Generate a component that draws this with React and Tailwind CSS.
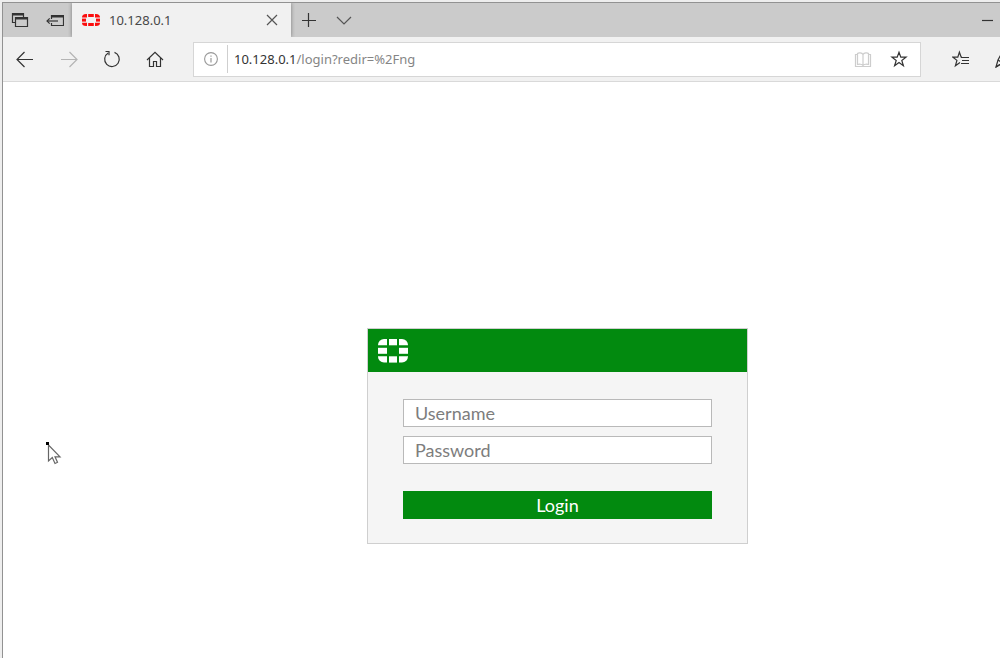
import React from "react";

function Icon({ w = 18, h = 18, className = "", children }) {
  return (
    <svg
      width={w}
      height={h}
      viewBox={`0 0 ${w} ${h}`}
      fill="none"
      stroke="currentColor"
      strokeWidth="1.2"
      className={`shrink-0 ${className}`}
      aria-hidden="true"
    >
      {children}
    </svg>
  );
}

function BrandMark({ width, height, className = "" }) {
  return (
    <svg width={width} height={height} viewBox="0 0 30 24" fill="currentColor" className={`shrink-0 ${className}`} aria-hidden="true">
      <path d="M6 0H9V6.3H0V6A6 6 0 0 1 6 0Z" />
      <path d="M11 0h8v6.3h-8z" />
      <path d="M21 0H24A6 6 0 0 1 30 6V6.3H21Z" />
      <path d="M0 8.8h9v6H0z" />
      <path d="M21 8.8h9v6h-9z" />
      <path d="M0 17.3H9V23.6H6A6 6 0 0 1 0 17.6Z" />
      <path d="M11 17.3h8v6.3h-8z" />
      <path d="M21 17.3H30V17.6A6 6 0 0 1 24 23.6H21Z" />
    </svg>
  );
}

function BarButton({ label, className = "", disabled, children }) {
  return (
    <button
      type="button"
      aria-label={label}
      disabled={disabled}
      className={`flex shrink-0 items-center justify-center ${className}`}
    >
      {children}
    </button>
  );
}

function TabStrip() {
  return (
    <div className="flex h-[34px] bg-[#cbcbcb] text-[#333]">
      <BarButton label="Tabs you've set aside" className="w-[34px]">
        <Icon>
          <path d="M4.5 11.5H1.5V2.5H12.5V6" />
          <path d="M1.5 3.5H12.5" strokeWidth="2" />
          <path d="M4.5 6.5H16.5V15.5H4.5Z" />
          <path d="M4.5 7.5H16.5" strokeWidth="2" />
        </Icon>
      </BarButton>
      <BarButton label="Set these tabs aside" className="w-[35px]">
        <Icon>
          <path d="M5.5 8V4.5H17.5V14.5H5.5V12" />
          <path d="M5.5 5.5H17.5" strokeWidth="2" />
          <path d="M12 10H1" />
          <path d="M3.7 7.3L1 10L3.7 12.7" />
        </Icon>
      </BarButton>
      <div className="flex w-[219px] shrink-0 items-center bg-[#f1f1f1] pr-[11px] pl-[10px] shadow-[0_0_4px_rgba(0,0,0,0.4)] [clip-path:inset(0_-4px)]">
        <svg width="18" height="14" viewBox="0 0 18 14" fill="#fb0d0d" className="shrink-0" aria-hidden="true">
          <path d="M4 1H5V4.5H0A4 3.5 0 0 1 4 1Z" />
          <path d="M6.2 1h5.6v3H6.2z" />
          <path d="M13 1H14A4 3.5 0 0 1 18 4.5H13Z" />
          <path d="M0 5.6h4v3H0z" />
          <path d="M14 5.6h4v3h-4z" />
          <path d="M0 9.7H5V13H4A4 3.3 0 0 1 0 9.7Z" />
          <path d="M6.2 10h5.6v3H6.2z" />
          <path d="M13 9.7H18A4 3.3 0 0 1 14 13H13Z" />
        </svg>
        <span className="ml-[9px] grow text-[13px] leading-4 text-[#484848]">10.128.0.1</span>
        <BarButton label="Close tab" className="size-4">
          <Icon w={14} h={14} className="text-[#555]">
            <path d="M2 2L12 12M12 2L2 12" />
          </Icon>
        </BarButton>
      </div>
      <BarButton label="New tab" className="w-[35px]">
        <Icon w={16} h={16}>
          <path d="M1 8.5H15M7.5 1V15" />
        </Icon>
      </BarButton>
      <BarButton label="Show tab previews" className="w-[35px]">
        <Icon w={16} h={16} className="text-[#555]">
          <path d="M1 5L8 12L15 5" />
        </Icon>
      </BarButton>
      <div className="grow" />
      <BarButton label="Minimize" className="w-6">
        <Icon w={12} h={12}>
          <path d="M0 6.5H11" />
        </Icon>
      </BarButton>
    </div>
  );
}

function Toolbar() {
  return (
    <div className="flex h-[45px] items-center overflow-hidden border-b border-[#d9d9d9] bg-[#f1f1f1] text-[#333]">
      <nav className="flex shrink-0">
        <BarButton label="Back" className="h-8 w-11">
          <Icon>
            <path d="M1 9.5H17M8.5 2L1 9.5L8.5 17" />
          </Icon>
        </BarButton>
        <BarButton label="Forward" disabled className="h-8 w-[43px] text-[#b4b4b4]">
          <Icon>
            <path d="M1 9.5H17M9.5 2L17 9.5L9.5 17" />
          </Icon>
        </BarButton>
        <BarButton label="Refresh" className="h-8 w-[43px]">
          <Icon>
            <path d="M11.5 2.4A7.3 7.3 0 1 1 5.2 3" />
            <path d="M2.5 1.5H6V5.2" />
          </Icon>
        </BarButton>
        <BarButton label="Home" className="h-8 w-[43px]">
          <Icon>
            <path d="M1 10L9 2.3L17 10" />
            <path d="M3.5 8V16.5H7.5V11.5H10.5V16.5H14.5V8" />
          </Icon>
        </BarButton>
      </nav>
      <div className="ml-[17px] flex h-[35px] min-w-0 grow items-center border border-[#d6d6d6] bg-white">
        <BarButton label="Site information" className="h-7 w-[34px] border-r border-[#cfcfcf]">
          <Icon w={16} h={16} className="text-[#999]">
            <circle cx="8" cy="8" r="6.4" strokeWidth="1.1" />
            <path d="M8 7V11.5M8 4.5V5.8" />
          </Icon>
        </BarButton>
        <a href="#login" className="ml-[6px] grow text-[13px] leading-4 text-[#858585]">
          <span className="text-[#333]">10.128.0.1</span>/login?redir=%2Fng
        </a>
        <BarButton label="Reading view" disabled className="h-8 w-9 text-[#cdcdcd]">
          <Icon>
            <path d="M9 4.5C8 2.5 4.5 2.5 3.5 3.5V14.5C5 14 8 14 9 15.5C10 14 13 14 14.5 14.5V3.5C13.5 2.5 10 2.5 9 4.5V15.5" />
            <path d="M3.5 4.5H1.5V16.5H16.5V4.5H14.5" />
          </Icon>
        </BarButton>
        <BarButton label="Add to favorites" className="mr-[3px] h-8 w-9">
          <Icon>
            <path d="M9 2.2L10.8 7.2H16L11.8 10.4L13.4 15.8L9 12.6L4.6 15.8L6.2 10.4L2 7.2H7.2Z" />
          </Icon>
        </BarButton>
      </div>
      <BarButton label="Favorites" className="ml-5 h-8 w-[40px]">
        <Icon>
          <path d="M10 7.2H9.2L7.4 2.2L5.8 7.2H1L4.9 10.4L3.4 15.8L8 12.6" />
          <path d="M9 7.5H17M10 10.5H17M9 13.5H17" />
        </Icon>
      </BarButton>
      <BarButton label="Add notes" className="h-8 w-[19px] overflow-hidden">
        <Icon w={18} h={18} className="ml-[26px]">
          <path d="M1 17L3 10L7.5 1.5L12 4L7.5 13Z" />
          <path d="M3 10L7.5 13L1 17" />
        </Icon>
      </BarButton>
    </div>
  );
}

function LoginCard() {
  return (
    <form className="w-[381px] border border-[#cfcfcf] bg-[#f5f5f5] font-['Lato',sans-serif] text-lg" onSubmit={(e) => e.preventDefault()}>
      <header className="flex h-[43px] items-center bg-[#028a0f] px-[10px] text-white">
        <BrandMark width={30} height={24} />
      </header>
      <div className="flex flex-col px-[35px] pt-[27px] pb-6">
        <input
          type="text"
          aria-label="Username"
          placeholder="Username"
          className="h-7 w-full border border-[#b9b9b9] bg-white px-[11px] leading-6 outline-none placeholder:text-[#7d7d7d]"
        />
        <input
          type="password"
          aria-label="Password"
          placeholder="Password"
          className="mt-[9px] h-7 w-full border border-[#b9b9b9] bg-white px-[11px] leading-6 outline-none placeholder:text-[#7d7d7d]"
        />
        <button type="submit" className="mt-[27px] h-7 bg-[#028a0f] leading-7 text-white">
          Login
        </button>
      </div>
    </form>
  );
}

export default function App() {
  return (
    <div className="flex min-h-screen flex-col overflow-hidden bg-[#eeeeee] pt-[2px] pl-[2px] font-['Noto_Sans',sans-serif]">
      <div className="relative flex grow flex-col border-t border-l border-[#929292] bg-white">
        <TabStrip />
        <Toolbar />
        <main className="flex grow items-start justify-center pt-[246px] pl-[112px]">
          <LoginCard />
        </main>
        <svg
          width="16"
          height="24"
          viewBox="0 0 16 24"
          className="pointer-events-none absolute top-[439px] left-[43px]"
          aria-hidden="true"
        >
          <path d="M2.5 3V19L6.3 15.6L9 21.5L11.5 20.3L9 14.8H14Z" fill="#fff" stroke="#666" strokeWidth="1.2" />
          <path d="M0 0h3v3H0z" fill="#000" />
        </svg>
      </div>
    </div>
  );
}
